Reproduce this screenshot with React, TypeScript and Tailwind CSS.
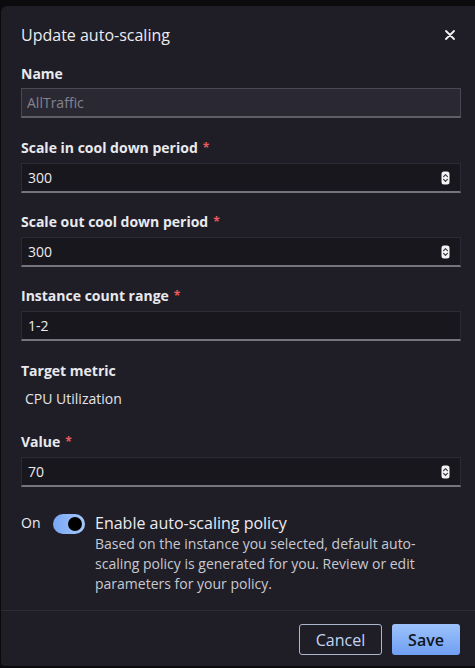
import React from 'react';

const font = { fontFamily: '"Open Sans", "Noto Sans", sans-serif' };

// Small white spinner control drawn at the right of number inputs
const Spinner = () => (
  <svg width="9" height="14" viewBox="0 0 9 14" className="shrink-0">
    <rect x="0.5" y="0.5" width="8" height="13" rx="2.5" fill="#f4f4f6" />
    <path d="M2.6 5.6 L4.5 3.7 L6.4 5.6" stroke="#3a3940" strokeWidth="1.2" fill="none" strokeLinecap="round" strokeLinejoin="round" />
    <path d="M2.6 8.4 L4.5 10.3 L6.4 8.4" stroke="#3a3940" strokeWidth="1.2" fill="none" strokeLinecap="round" strokeLinejoin="round" />
  </svg>
);

const Label: React.FC<{ text: string; required?: boolean }> = ({ text, required }) => (
  <div className="h-[18px] flex items-center text-[14px] font-bold leading-[18px] text-[#e9e9ee]">
    {text}
    {required && <span className="ml-[5px] text-[12px] text-[#eb5b5b]">*</span>}
  </div>
);

const Field: React.FC<{ value: string; number?: boolean }> = ({ value, number }) => (
  <div className="mt-[6px] h-[30px] flex items-center justify-between pl-[6px] pr-[10px] bg-[#18171d] border-t border-x border-t-[#2c2b33] border-x-[#2c2b33] border-b-2 border-b-[#76757e] text-[14px] text-[#ececf0]">
    <span>{value}</span>
    {number && <Spinner />}
  </div>
);

const App: React.FC = () => {
  return (
    <div className="w-[475px] h-[668px] overflow-hidden bg-[#0b0b0e] pt-[6px] pl-px" style={font}>
      <div className="w-[480px] h-[660px] bg-[#1f1e27] rounded-tl-[6px] rounded-bl-[4px] flex flex-col">
        {/* Header */}
        <div className="flex items-center justify-between pl-[20px] pr-[26px] pt-[19px] h-[39px]">
          <h1 className="text-[16px] leading-[20px] font-medium text-[#ececf0]">Update auto-scaling</h1>
          <svg width="10" height="10" viewBox="0 0 10 10">
            <path d="M1 1 L9 9 M9 1 L1 9" stroke="#f2f2f5" strokeWidth="1.8" strokeLinecap="round" />
          </svg>
        </div>

        <div className="px-[20px]">
          <div className="mt-[20px]">
            <Label text="Name" />
            <div className="mt-[5px] h-[30px] flex items-center pl-[5px] bg-[#2a2933] border border-[#4a4853] border-b-2 border-b-[#5f5d68] text-[14px] text-[#85838e]">
              AllTraffic
            </div>
          </div>

          <div className="mt-[21px]">
            <Label text="Scale in cool down period" required />
            <Field value="300" number />
          </div>

          <div className="mt-[20px]">
            <Label text="Scale out cool down period" required />
            <Field value="300" number />
          </div>

          <div className="mt-[20px]">
            <Label text="Instance count range" required />
            <Field value="1-2" />
          </div>

          <div className="mt-[21px]">
            <Label text="Target metric" />
            <div className="mt-[9px] pl-[4px] text-[14px] leading-[20px] text-[#e4e4e9]">CPU Utilization</div>
          </div>

          <div className="mt-[24px]">
            <Label text="Value" required />
            <Field value="70" number />
          </div>

          {/* Toggle */}
          <div className="mt-[25px] flex items-start">
            <span className="mt-[1px] text-[14px] leading-[20px] text-[#ececf0] w-[32px]">On</span>
            <div className="mt-[2px] w-[32px] h-[20px] rounded-full bg-gradient-to-r from-[#78a7f5] to-[#a8c8fb] flex items-center justify-end pr-[3px]">
              <div className="w-[14px] h-[14px] rounded-full bg-black" />
            </div>
            <div className="ml-[10px]">
              <div className="text-[16px] leading-[22px] font-medium text-[#ececf0]">Enable auto-scaling policy</div>
              <p className="text-[14px] leading-[20px] text-[#c9c9d0] w-[340px]">
                Based on the instance you selected, default auto-scaling policy is generated for you. Review or edit parameters for your policy.
              </p>
            </div>
          </div>
        </div>

        {/* Footer */}
        <div className="mt-auto border-t border-[#2e2d37] flex justify-end gap-[10px] pr-[21px] pt-[13px] pb-[11px]">
          <button className="w-[83px] h-[31px] rounded-[3px] border border-[#a9b6cc] text-[16px] font-medium text-[#c4d4f2]">Cancel</button>
          <button className="w-[68px] h-[31px] rounded-[3px] bg-gradient-to-b from-[#9dc2fb] to-[#6f9ff3] text-[16px] font-semibold text-[#10141c]">Save</button>
        </div>
      </div>
    </div>
  );
};

export default App;
